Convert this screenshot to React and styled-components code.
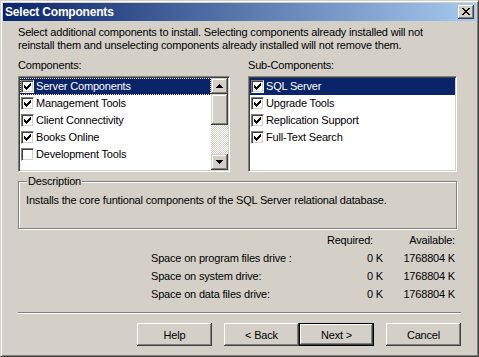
import React from "react";
import styled, { createGlobalStyle } from "styled-components";

const Global = createGlobalStyle`
  html, body { margin: 0; padding: 0; background: #d4d0c8; }
  * { box-sizing: border-box; }
`;

const Window = styled.div`
  width: 479px;
  height: 357px;
  background: #d4d0c8;
  border: 1px solid;
  border-color: #d4d0c8 #404040 #404040 #d4d0c8;
  box-shadow: inset 1px 1px #fff, inset -1px -1px #808080;
  padding: 2px;
  display: flex;
  flex-direction: column;
  font-family: "Liberation Sans", Arial, sans-serif;
  font-size: 11px;
  letter-spacing: -0.18px;
  color: #000;
  overflow: hidden;
`;

const TitleBar = styled.div`
  height: 18px;
  flex: none;
  display: flex;
  align-items: center;
  justify-content: space-between;
  padding: 0 2px 0 2px;
  background: linear-gradient(to right, #0a246a, #a6caf0);
`;

const TitleText = styled.span`
  color: #fff;
  font-weight: bold;
  font-size: 12px;
  letter-spacing: -0.2px;
  line-height: 18px;
`;

const CloseButton = styled.div`
  width: 16px;
  height: 14px;
  background: #d4d0c8;
  box-shadow: inset -1px -1px #404040, inset 1px 1px #fff, inset -2px -2px #808080;
  display: flex;
  align-items: flex-start;
  justify-content: flex-start;
  padding: 3px 0 0 4px;
  svg { display: block; }
`;

const Content = styled.div`
  flex: 1;
  display: flex;
  flex-direction: column;
  padding: 0 15px;
`;

const Upper = styled.div`
  display: flex;
  flex-direction: column;
  padding-right: 4px;
`;

const Intro = styled.p`
  margin: 5px 0 0;
  line-height: 13px;
  height: 26px;
  white-space: nowrap;
`;

const Columns = styled.div`
  display: grid;
  grid-template-columns: 212px 209px;
  column-gap: 18px;
  margin-top: 7px;
`;

const Column = styled.div`
  display: flex;
  flex-direction: column;
`;

const FieldLabel = styled.div`
  line-height: 13px;
  height: 13px;
  margin-bottom: 4px;
`;

const ListBox = styled.div`
  height: 96px;
  background: #fff;
  border: 1px solid;
  border-color: #808080 #fff #fff #808080;
  box-shadow: inset 1px 1px #404040, inset -1px -1px #d4d0c8;
  padding: 1px;
  display: flex;
`;

const ListItems = styled.div`
  flex: 1;
  display: flex;
  flex-direction: column;
  min-width: 0;
`;

const ListRow = styled.div`
  height: 17px;
  flex: none;
  display: flex;
  align-items: flex-start;
  padding-top: 2px;
  background: ${(p) => (p.$selected ? "#0a246a" : "transparent")};
  color: ${(p) => (p.$selected ? "#fff" : "#000")};
  outline: ${(p) => (p.$focused ? "1px dotted #f5db95" : "none")};
  outline-offset: -1px;
`;

const CheckBox = styled.div`
  width: 13px;
  height: 13px;
  flex: none;
  margin-left: 1px;
  background: #fff;
  border: 1px solid;
  border-color: #808080 #fff #fff #808080;
  box-shadow: inset 1px 1px #404040, inset -1px -1px #d4d0c8;
  padding: 2px 0 0 2px;
  svg { display: block; }
`;

const RowText = styled.span`
  line-height: 13px;
  padding-left: 2px;
  white-space: nowrap;
`;

const ScrollBar = styled.div`
  width: 17px;
  flex: none;
  display: flex;
  flex-direction: column;
`;

const ScrollButton = styled.div`
  height: 16px;
  flex: none;
  background: #d4d0c8;
  box-shadow: inset -1px -1px #404040, inset 1px 1px #d4d0c8, inset -2px -2px #808080, inset 2px 2px #fff;
  display: flex;
  align-items: center;
  justify-content: center;
  svg { display: block; }
`;

const ScrollThumb = styled.div`
  height: 31px;
  flex: none;
  background: #d4d0c8;
  box-shadow: inset -1px -1px #404040, inset 1px 1px #d4d0c8, inset -2px -2px #808080, inset 2px 2px #fff;
`;

const ScrollTrack = styled.div`
  flex: 1;
  background: repeating-conic-gradient(#d4d0c8 0 25%, #fff 0 50%) 0 0 / 2px 2px;
`;

const GroupBox = styled.fieldset`
  margin: 3px 0 0;
  height: 54px;
  padding: 0 7px;
  border: 1px solid #808080;
  box-shadow: inset 1px 1px #fff, 1px 1px #fff;
  min-width: 0;
`;

const GroupLegend = styled.legend`
  padding: 0 1px;
  margin-left: 1px;
  line-height: 13px;
  background: #d4d0c8;
`;

const GroupText = styled.div`
  margin-top: 6px;
  line-height: 13px;
`;

const SpaceTable = styled.div`
  display: grid;
  grid-template-columns: 1fr 60px 72px;
  grid-auto-rows: 13px;
  row-gap: 5px;
  margin: 5px 6px 0 133px;
  line-height: 13px;
`;

const Cell = styled.div`
  text-align: ${(p) => (p.$right ? "right" : "left")};
  padding-right: ${(p) => p.$pad || 0}px;
  white-space: nowrap;
`;

const Separator = styled.div`
  margin-top: 11px;
  height: 2px;
  border-top: 1px solid #808080;
  border-bottom: 1px solid #fff;
`;

const ButtonRow = styled.div`
  display: flex;
  justify-content: flex-end;
  margin-top: 9px;
`;

const Button = styled.button`
  width: 75px;
  height: 23px;
  margin: 0 0 0 ${(p) => p.$gap || 0}px;
  padding: 0;
  font-family: inherit;
  font-size: 11px;
  letter-spacing: -0.18px;
  color: #000;
  background: #d4d0c8;
  border: ${(p) => (p.$default ? "1px solid #000" : "none")};
  box-shadow: inset -1px -1px #404040, inset 1px 1px #fff, inset -2px -2px #808080, inset 2px 2px #d4d0c8;
  cursor: default;
`;

const Pixels = ({ rows, color = "#000" }) => {
  const w = rows[0].length;
  const h = rows.length;
  return (
    <svg width={w} height={h} viewBox={`0 0 ${w} ${h}`} shapeRendering="crispEdges">
      {rows.flatMap((r, y) =>
        [...r].map((c, x) =>
          c === "X" ? <rect key={`${x}-${y}`} x={x} y={y} width="1" height="1" fill={color} /> : null
        )
      )}
    </svg>
  );
};

const CLOSE = ["XX....XX", ".XX..XX.", "..XXXX..", "...XX...", "..XXXX..", ".XX..XX.", "XX....XX"];
const CHECK = ["......X", ".....XX", "X...XXX", "XX.XXX.", "XXXXX..", ".XXX...", "..X...."];
const UP = ["...X...", "..XXX..", ".XXXXX.", "XXXXXXX"];
const DOWN = ["XXXXXXX", ".XXXXX.", "..XXX..", "...X..."];

const components = [
  { label: "Server Components", checked: true },
  { label: "Management Tools", checked: true },
  { label: "Client Connectivity", checked: true },
  { label: "Books Online", checked: true },
  { label: "Development Tools", checked: false },
];

const subComponents = ["SQL Server", "Upgrade Tools", "Replication Support", "Full-Text Search"];

const spaces = [
  "Space on program files drive :",
  "Space on system drive:",
  "Space on data files drive:",
];

const Row = ({ label, checked, selected, focused }) => (
  <ListRow $selected={selected} $focused={focused}>
    <CheckBox>{checked && <Pixels rows={CHECK} />}</CheckBox>
    <RowText>{label}</RowText>
  </ListRow>
);

export default function App() {
  return (
    <>
      <Global />
      <Window>
        <TitleBar>
          <TitleText>Select Components</TitleText>
          <CloseButton>
            <Pixels rows={CLOSE} />
          </CloseButton>
        </TitleBar>
        <Content>
          <Upper>
            <Intro>
              Select additional components to install. Selecting components already installed will not
              <br />
              reinstall them and unselecting components already installed will not remove them.
            </Intro>
            <Columns>
              <Column>
                <FieldLabel>Components:</FieldLabel>
                <ListBox>
                  <ListItems>
                    {components.map((c, i) => (
                      <Row key={c.label} label={c.label} checked={c.checked} selected={i === 0} focused={i === 0} />
                    ))}
                  </ListItems>
                  <ScrollBar>
                    <ScrollButton>
                      <Pixels rows={UP} />
                    </ScrollButton>
                    <ScrollThumb />
                    <ScrollTrack />
                    <ScrollButton>
                      <Pixels rows={DOWN} />
                    </ScrollButton>
                  </ScrollBar>
                </ListBox>
              </Column>
              <Column>
                <FieldLabel>Sub-Components:</FieldLabel>
                <ListBox>
                  <ListItems>
                    {subComponents.map((s, i) => (
                      <Row key={s} label={s} checked selected={i === 0} />
                    ))}
                  </ListItems>
                </ListBox>
              </Column>
            </Columns>
            <GroupBox>
              <GroupLegend>Description</GroupLegend>
              <GroupText>Installs the core funtional components of the SQL Server relational database.</GroupText>
            </GroupBox>
          </Upper>
          <SpaceTable>
            <Cell />
            <Cell $right $pad={10}>Required:</Cell>
            <Cell $right>Available:</Cell>
            {spaces.map((s) => (
              <React.Fragment key={s}>
                <Cell>{s}</Cell>
                <Cell $right>0 K</Cell>
                <Cell $right>1768804 K</Cell>
              </React.Fragment>
            ))}
          </SpaceTable>
          <Separator />
          <ButtonRow>
            <Button>Help</Button>
            <Button $gap={12}>&lt; Back</Button>
            <Button $default>Next &gt;</Button>
            <Button $gap={12}>Cancel</Button>
          </ButtonRow>
        </Content>
      </Window>
    </>
  );
}
